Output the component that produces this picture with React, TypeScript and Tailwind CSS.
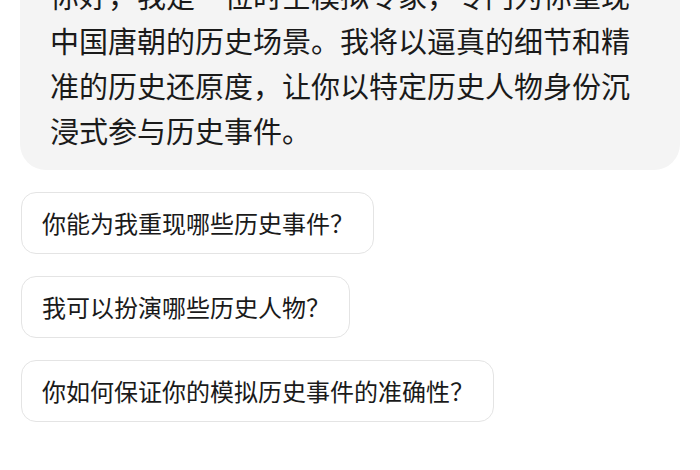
const intro = [
  '你好，我是一位时空模拟专家，专门为你重现',
  '中国唐朝的历史场景。我将以逼真的细节和精',
  '准的历史还原度，让你以特定历史人物身份沉',
  '浸式参与历史事件。',
]

const suggestions = [
  '你能为我重现哪些历史事件？',
  '我可以扮演哪些历史人物？',
  '你如何保证你的模拟历史事件的准确性？',
]

export default function App() {
  return (
    <div
      className="w-[700px] h-[470px] overflow-hidden bg-white px-5 text-[#1a1a1a]"
      style={{ fontFamily: '"Noto Sans CJK SC", "Noto Sans", sans-serif' }}
    >
      <div className="-mt-[60px] rounded-[26px] bg-[#f4f4f4] pl-[30px] pr-5 pt-[33px] pb-[17px]">
        {intro.map((line, i) => (
          <p key={i} className="whitespace-nowrap text-[29px] leading-[45px]">
            {line}
          </p>
        ))}
      </div>

      <div className="mt-[22px] flex flex-col items-start gap-[22px] pl-px">
        {suggestions.map((q) => (
          <button
            key={q}
            className="flex h-[62px] items-center rounded-[15px] border border-[#e4e4e4] bg-white pl-5 pr-[19px] text-[24px] leading-none whitespace-nowrap"
          >
            {q}
          </button>
        ))}
      </div>
    </div>
  )
}
